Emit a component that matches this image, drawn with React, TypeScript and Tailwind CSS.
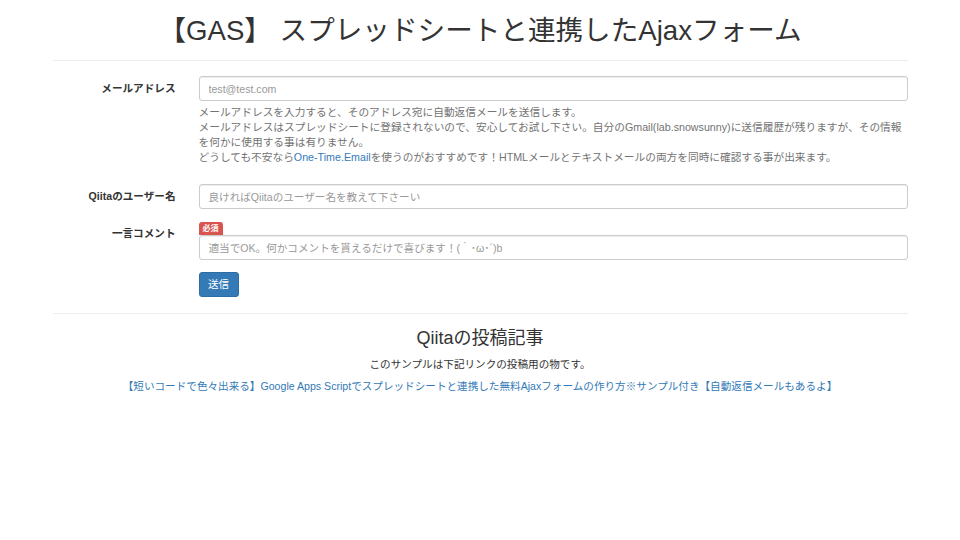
import React from "react";

const font = { fontFamily: '"Liberation Sans", "Noto Sans CJK JP", sans-serif' };

const inputCls =
  "block h-[25px] w-full rounded-[3px] border border-[#ccc] bg-white px-[9px] text-[10.6px] text-[#555] shadow-[inset_0_1px_1px_rgba(0,0,0,0.075)] outline-none placeholder:text-[#999]";

export default function App() {
  return (
    <div className="min-h-[540px] w-full bg-white text-[#333]" style={font}>
      <div className="mx-auto w-[855px] pt-[15px]">
        <h1 className="text-center text-[27.6px] leading-[32px] font-normal text-[#333]">
          【GAS】 スプレッドシートと連携したAjaxフォーム
        </h1>
        <hr className="mt-[13px] border-t border-[#eee]" />

        <div className="mt-[15px] flex flex-col">
          <div className="flex">
            <div className="w-[123px] pt-[5px] text-right text-[10.6px] leading-[15px] font-bold">
              メールアドレス
            </div>
            <div className="ml-[23px] w-[709px]">
              <input className={inputCls} placeholder="test@test.com" />
              <div className="mt-[4px] text-[10.7px] leading-[15px] text-[#737373]">
                <div className="whitespace-nowrap">
                  メールアドレスを入力すると、そのアドレス宛に自動返信メールを送信します。
                </div>
                <div className="whitespace-nowrap">
                  メールアドレスはスプレッドシートに登録されないので、安心してお試し下さい。自分のGmail(lab.snowsunny)に送信履歴が残りますが、その情報
                </div>
                <div className="whitespace-nowrap">を何かに使用する事は有りません。</div>
                <div className="whitespace-nowrap">
                  どうしても不安なら
                  <a className="text-[#337ab7]" href="#">
                    One-Time.Email
                  </a>
                  を使うのがおすすめです！HTMLメールとテキストメールの両方を同時に確認する事が出来ます。
                </div>
              </div>
            </div>
          </div>

          <div className="mt-[19px] flex">
            <div className="w-[123px] pt-[5px] text-right text-[10.6px] leading-[15px] font-bold">
              Qiitaのユーザー名
            </div>
            <div className="ml-[23px] w-[709px]">
              <input className={inputCls} placeholder="良ければQiitaのユーザー名を教えて下さーい" />
            </div>
          </div>

          <div className="mt-[13px] flex">
            <div className="w-[123px] pt-[4px] text-right text-[10.6px] leading-[15px] font-bold">
              一言コメント
            </div>
            <div className="ml-[23px] w-[709px]">
              <div className="flex">
                <span className="flex h-[13px] items-center rounded-t-[3px] bg-[#d9534f] px-[4px] text-[8px] leading-none font-bold text-white">
                  必須
                </span>
              </div>
              <input
                className={inputCls}
                placeholder="適当でOK。何かコメントを貰えるだけで喜びます！(｀･ω･´)b"
              />
              <button className="mt-[12px] flex h-[25px] w-[40px] items-center justify-center rounded-[3px] border border-[#2e6da4] bg-[#337ab7] text-[10.6px] text-white">
                送信
              </button>
            </div>
          </div>
        </div>

        <hr className="mt-[16px] border-t border-[#eee]" />

        <h2 className="mt-[12px] text-center text-[18px] leading-[24px] font-normal text-[#333]">
          Qiitaの投稿記事
        </h2>
        <p className="mt-[7px] text-center text-[10.6px] leading-[15px] text-[#333]">
          このサンプルは下記リンクの投稿用の物です。
        </p>
        <p className="mt-[7px] text-center text-[10.6px] leading-[15px]">
          <a className="text-[#337ab7]" href="#">
            【短いコードで色々出来る】Google Apps Scriptでスプレッドシートと連携した無料Ajaxフォームの作り方※サンプル付き【自動返信メールもあるよ】
          </a>
        </p>
      </div>
    </div>
  );
}
